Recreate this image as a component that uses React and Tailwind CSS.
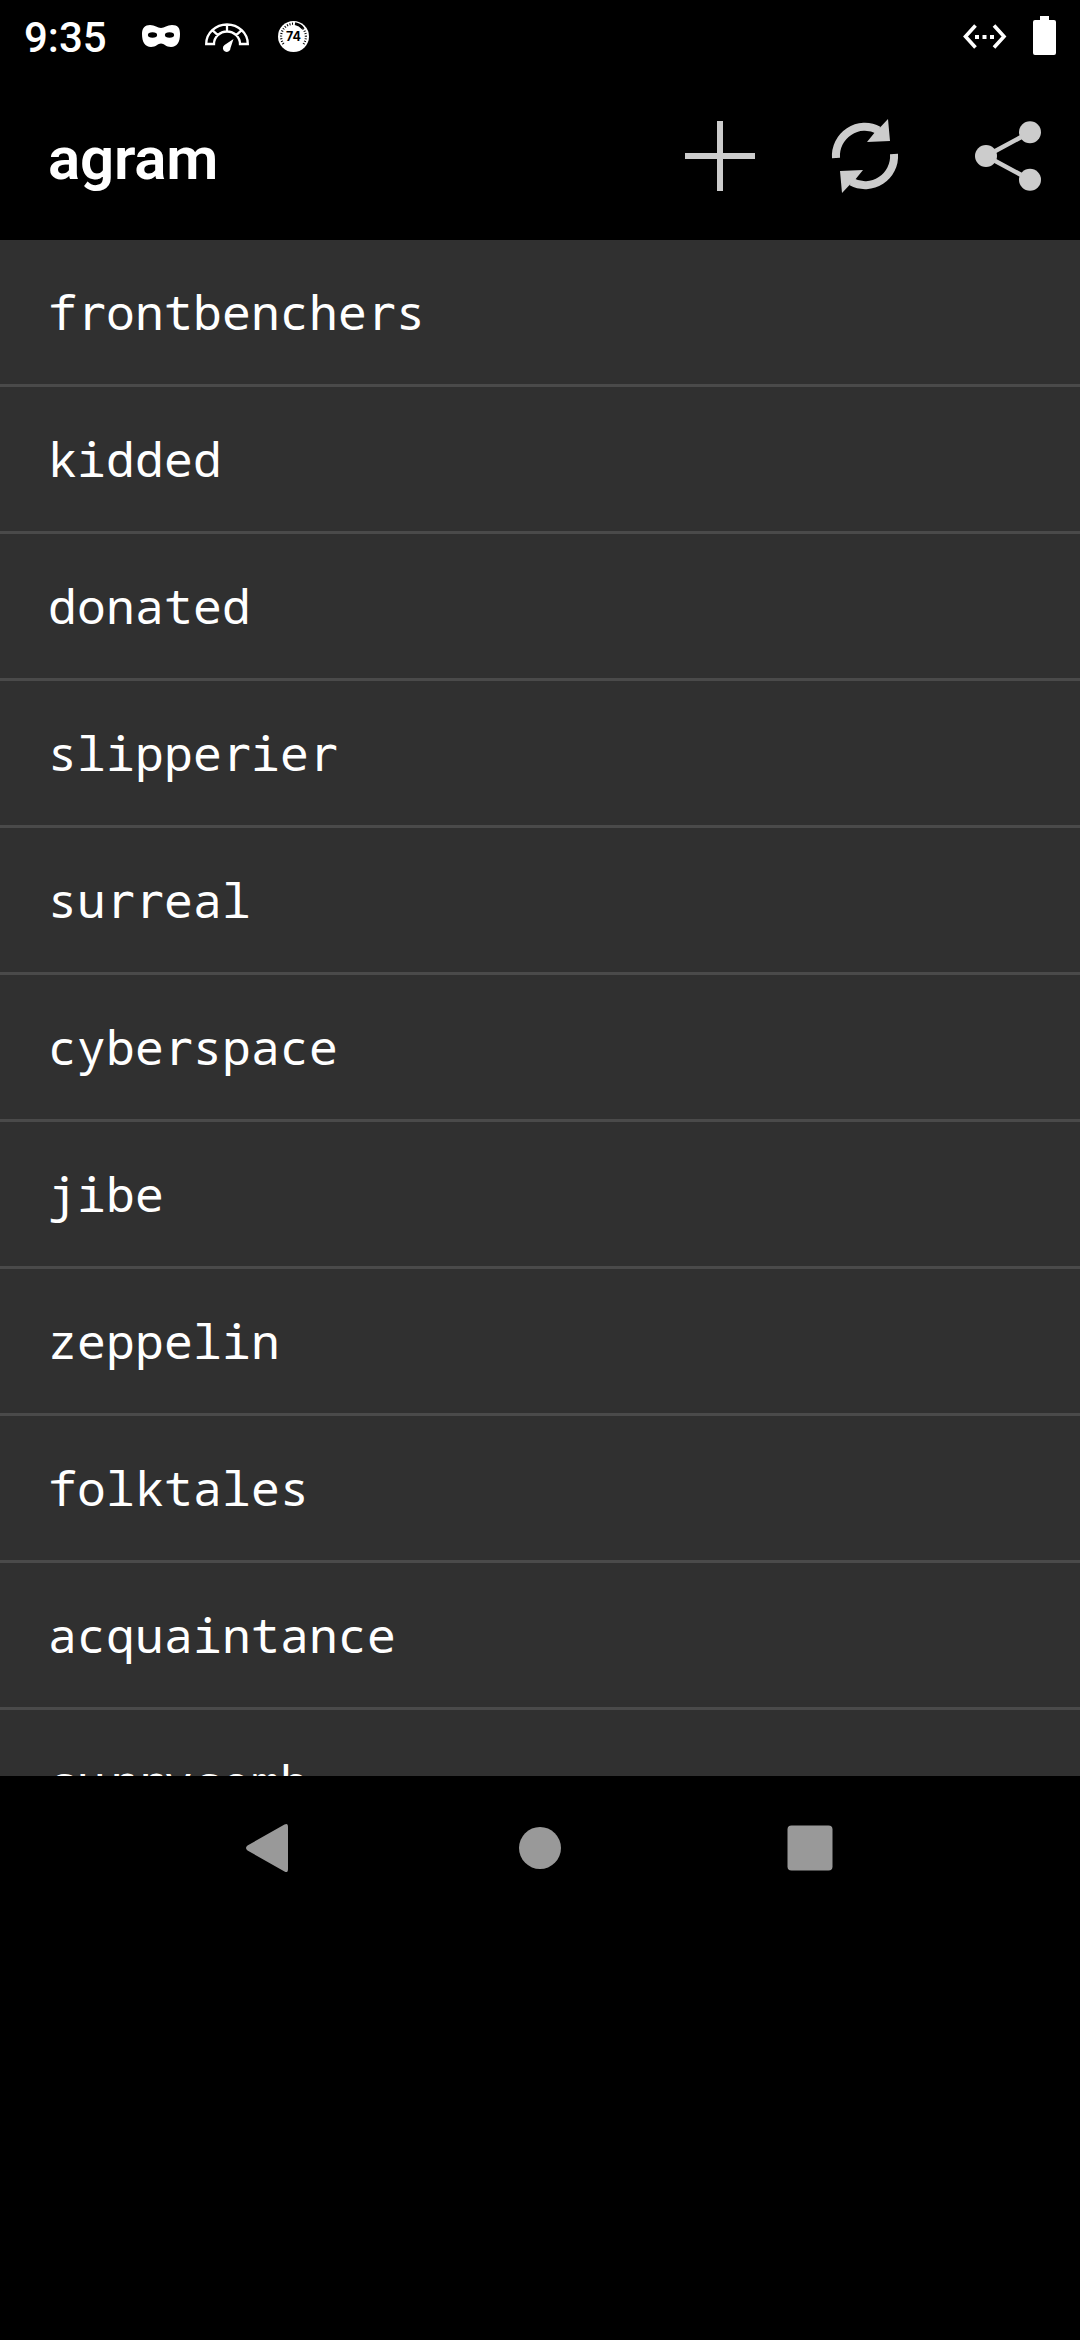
const words = [
  "frontbenchers", "kidded", "donated", "slipperier", "surreal", "cyberspace",
  "jibe", "zeppelin", "folktales", "acquaintance", "currycomb",
];

function StatusBar() {
  return (
    <div className="flex h-[72px] shrink-0 items-center text-white">
      <div className="mt-[3px] ml-6 w-[112px] font-['Roboto',sans-serif] text-[42px] leading-[50px] font-medium">9:35</div>
      <svg className="h-[72px] w-[200px]" viewBox="136 0 200 72">
        <path fill="#fff" d="M150 25C155 25 157.500 28 161 28S167 25 172 25C178 25 180 28 180 34C180 42 177 47 171 47C166 47 164 43.500 161 43.500S156 47 151 47C145 47 142 42 142 34C142 28 145 25 150 25Z" />
        <ellipse cx="152.500" cy="35" rx="4.600" ry="2.700" />
        <ellipse cx="169.500" cy="35" rx="4.600" ry="2.700" />
        <path fill="none" stroke="#fff" strokeWidth="2.300" d="M206.200 44A20.800 19.500 0 0 1 247.800 44H240A13 12.500 0 0 0 214 44ZM212.300 30.200L217.800 35.200M227 25V31.500M241.700 30.200L236.200 35.200" />
        <path fill="#fff" d="M233.500 39L230.500 48A3.800 3.800 0 1 1 224.500 45Z" />
        <circle cx="293.500" cy="36.500" r="15.500" fill="#fff" />
        <path fill="none" stroke="#000" strokeWidth="2.200" strokeDasharray="1 1.600" d="M283.500 44A12.800 12.800 0 0 1 293 23.700M303 28.500A12.800 12.800 0 0 1 303.500 44" />
        <path fill="none" stroke="#000" strokeWidth="2.800" d="M295 23.700Q300 24.500 303 28.500" />
        <text x="293.500" y="41.200" textAnchor="middle" fontFamily="Inter, sans-serif" fontWeight="700" fontSize="12.500" fill="#000">74</text>
      </svg>
      <svg className="ml-auto h-[72px] w-[120px]" viewBox="960 0 120 72" fill="#fff">
        <path fill="none" stroke="#fff" strokeWidth="3.600" d="M975.500 25.500L965.500 36.500L975.500 47.500M994 25.500L1004 36.500L994 47.500" />
        <path d="M975 35h4v4h-4zM982.500 35h4v4h-4zM990 35h4v4h-4z" />
        <path d="M1040 16h9v4h5a2 2 0 0 1 2 2v31a2 2 0 0 1-2 2h-19a2 2 0 0 1-2-2v-31a2 2 0 0 1 2-2h5z" />
      </svg>
    </div>
  );
}

function RefreshArrow() {
  return (
    <>
      <path fill="none" stroke="#ccc" strokeWidth="8" d="M836 158A29 29 0 0 1 878.500 130.200" />
      <path fill="#ccc" d="M888 119L890 141L867 142L874.700 132.500L880.500 127Z" />
    </>
  );
}

function ActionBar() {
  return (
    <header className="flex h-[168px] shrink-0 items-center">
      <h1 className="mt-[6px] ml-12 grow font-['Roboto',sans-serif] text-[60px] leading-[70px] font-semibold tracking-[-0.2px] text-white">agram</h1>
      <button aria-label="Add" className="h-36 w-36">
        <svg viewBox="648 84 144 144">
          <path d="M720 121V191M685 156H755" stroke="#ccc" strokeWidth="6" />
        </svg>
      </button>
      <button aria-label="Refresh" className="h-36 w-36">
        <svg viewBox="792 84 144 144">
          <RefreshArrow />
          <g transform="rotate(180 865 156)"><RefreshArrow /></g>
        </svg>
      </button>
      <button aria-label="Share" className="h-36 w-36">
        <svg viewBox="936 84 144 144" fill="#ccc">
          <path d="M1030 132.300L986 156L1030 179.700" fill="none" stroke="#ccc" strokeWidth="4.500" />
          <circle cx="986" cy="156" r="11" />
          <circle cx="1030" cy="132.300" r="11" />
          <circle cx="1030" cy="179.700" r="11" />
        </svg>
      </button>
    </header>
  );
}

// The serifless "r" comes from DejaVu; all other letters are Noto Sans Mono.
function Word({ text }) {
  return (
    <span>
      {text.split(/(r+)/).map((part, i) =>
        part.startsWith("r")
          ? <span key={i} className="font-['DejaVu_Sans_Mono',monospace] tracking-[0.1px]">{part}</span>
          : part
      )}
    </span>
  );
}

export default function App() {
  return (
    <div className="flex h-[2340px] w-[1080px] flex-col overflow-hidden bg-black">
      <StatusBar />
      <ActionBar />
      <ul className="h-[1536px] shrink-0 overflow-hidden bg-[#303030]">
        {words.map((word) => (
          <li key={word} className="flex h-[147px] items-center border-b-[3px] border-[#4a4a4a] pl-12 font-['Noto_Sans_Mono','DejaVu_Sans_Mono',monospace] text-[48px] leading-[56px] tracking-[0.2px] text-white">
            <Word text={word} />
          </li>
        ))}
      </ul>
      <nav className="h-36 shrink-0">
        <svg className="h-36 w-full" viewBox="0 1776 1080 144" fill="#999">
          <path d="M284.500 1824.500Q288 1822.500 288 1827V1869Q288 1873.500 284.500 1871.500L247.500 1850.500Q244.500 1848 247.500 1845.500Z" />
          <circle cx="540" cy="1848" r="21" />
          <rect x="787.500" y="1825.500" width="45" height="45" rx="4" />
        </svg>
      </nav>
    </div>
  );
}
